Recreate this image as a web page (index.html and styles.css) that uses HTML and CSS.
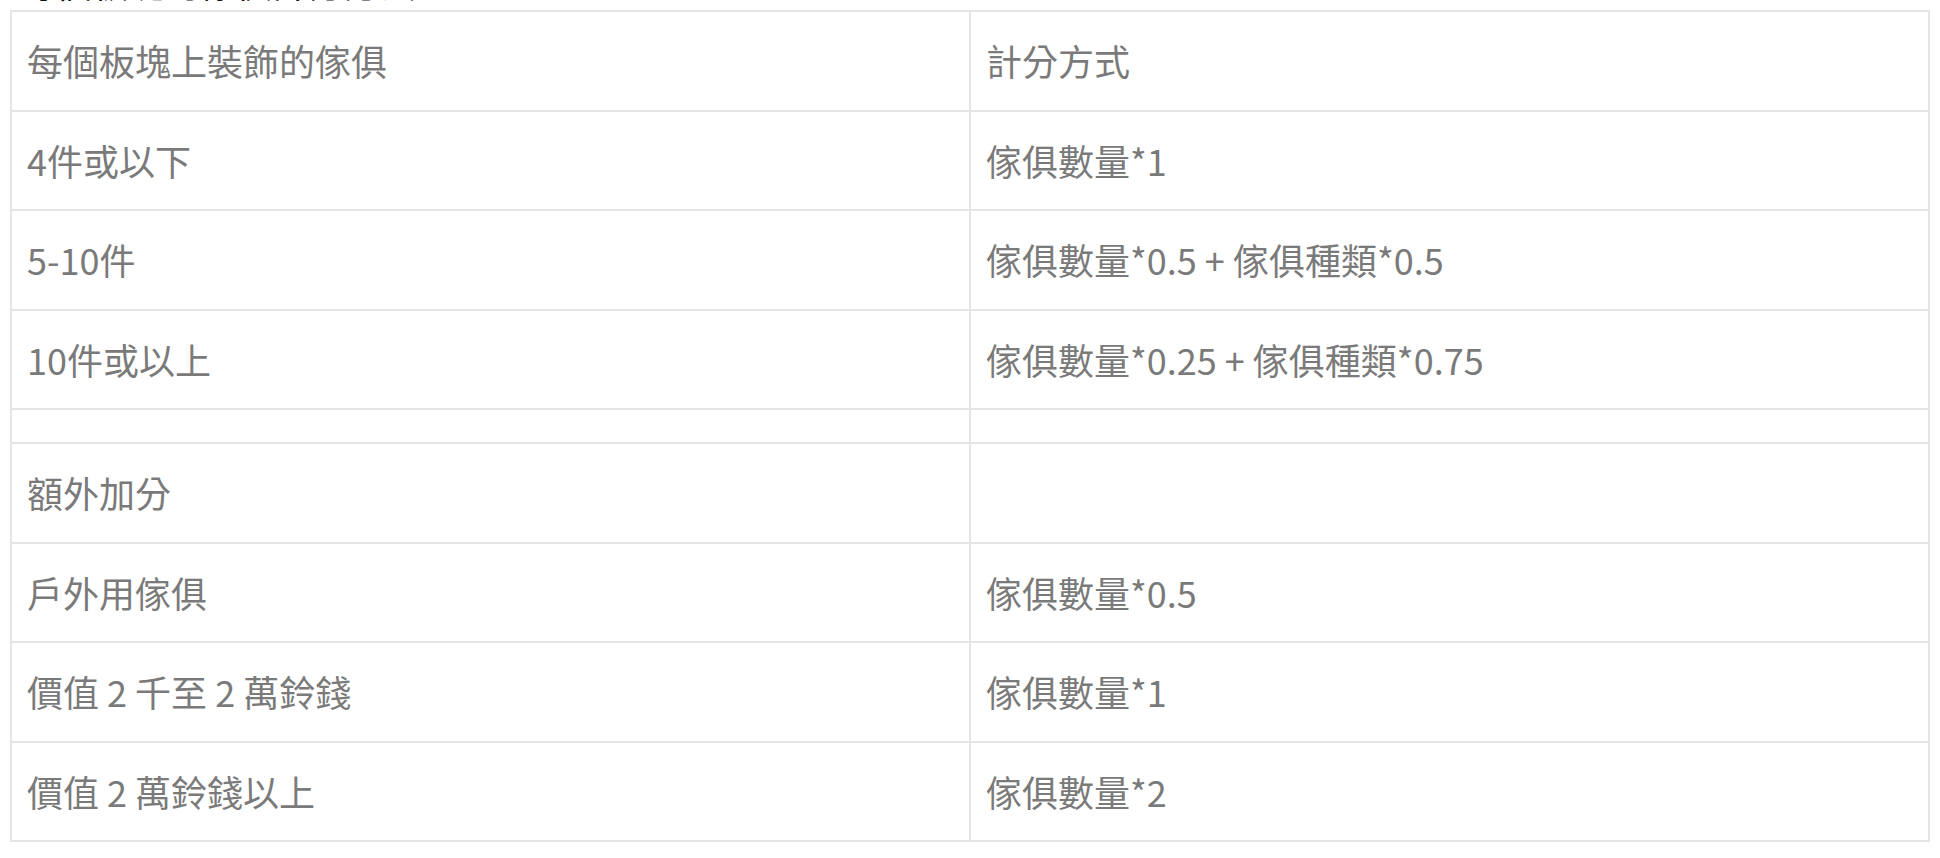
FILE: index.html
```html
<!DOCTYPE html>
<html lang="zh-Hant">
<head>
<meta charset="utf-8">
<title>傢俱計分</title>
<link rel="stylesheet" href="styles.css">
</head>
<body>
<p class="lead">每個板塊的傢俱計分方法，</p>
<table class="score-table">
  <tbody>
    <tr><td>每個板塊上裝飾的傢俱</td><td>計分方式</td></tr>
    <tr><td>4件或以下</td><td>傢俱數量*1</td></tr>
    <tr><td>5-10件</td><td>傢俱數量*0.5 + 傢俱種類*0.5</td></tr>
    <tr><td>10件或以上</td><td>傢俱數量*0.25 + 傢俱種類*0.75</td></tr>
    <tr class="spacer"><td></td><td></td></tr>
    <tr><td>額外加分</td><td></td></tr>
    <tr><td>戶外用傢俱</td><td>傢俱數量*0.5</td></tr>
    <tr><td>價值 2 千至 2 萬鈴錢</td><td>傢俱數量*1</td></tr>
    <tr><td>價值 2 萬鈴錢以上</td><td>傢俱數量*2</td></tr>
  </tbody>
</table>
</body>
</html>
```

FILE: styles.css
```css
html, body {
  margin: 0;
  padding: 0;
  background: #ffffff;
}

body {
  padding: 0 10px;
  font-family: "Noto Sans CJK TC", "Noto Sans", sans-serif;
  overflow: hidden;
}

.lead {
  margin: -43px 0 0 0;
  padding-left: 10px;
  height: 53px;
  font-size: 36px;
  line-height: 50px;
  color: #111111;
  white-space: nowrap;
}

.score-table {
  width: 100%;
  border-collapse: collapse;
  table-layout: fixed;
  font-size: 36px;
  font-weight: 400;
  color: #7a7a7a;
}

.score-table td {
  width: 50%;
  border: 2px solid #e5e5e5;
  padding: 16px 15px;
  line-height: 65.5px;
  vertical-align: middle;
  white-space: nowrap;
}

.score-table .spacer td {
  padding: 16px 15px;
  line-height: 0;
}
```
